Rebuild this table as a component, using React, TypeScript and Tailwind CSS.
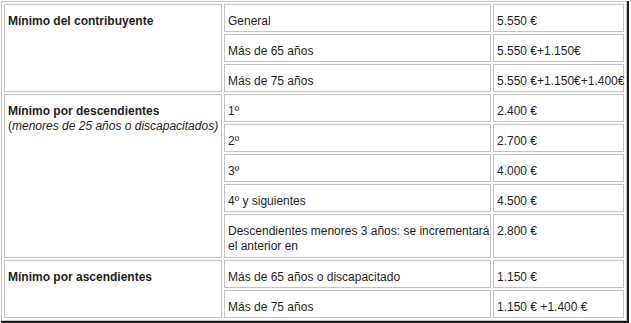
import React from 'react';

interface Row {
  label: string[];
  value: string;
  tall?: boolean;
}

interface Group {
  title: string;
  note?: string;
  rows: Row[];
}

const groups: Group[] = [
  {
    title: 'Mínimo del contribuyente',
    rows: [
      { label: ['General'], value: '5.550 €' },
      { label: ['Más de 65 años'], value: '5.550 €+1.150€' },
      { label: ['Más de 75 años'], value: '5.550 €+1.150€+1.400€' },
    ],
  },
  {
    title: 'Mínimo por descendientes',
    note: 'menores de 25 años o discapacitados',
    rows: [
      { label: ['1º'], value: '2.400 €' },
      { label: ['2º'], value: '2.700 €' },
      { label: ['3º'], value: '4.000 €' },
      { label: ['4º y siguientes'], value: '4.500 €' },
      {
        label: ['Descendientes menores 3 años: se incrementará', 'el anterior en'],
        value: '2.800 €',
        tall: true,
      },
    ],
  },
  {
    title: 'Mínimo por ascendientes',
    rows: [
      { label: ['Más de 65 años o discapacitado'], value: '1.150 €' },
      { label: ['Más de 75 años'], value: '1.150 € +1.400 €' },
    ],
  },
];

const cell = 'border border-[#c4c4c4] align-top pl-[3px] pr-0 pt-[9px] pb-0';

const App: React.FC = () => {
  return (
    <div className="w-[631px] h-[323px] bg-white overflow-hidden">
      <div
        className="ml-[1px] mt-[1px] w-[628px] border-r-2 border-b-2 border-[#1c1c1c] text-[12px] leading-[15px] text-[#1e1e1e]"
        style={{ fontFamily: '"Liberation Sans", Arial, sans-serif' }}
      >
        <table className="w-[626px] border border-[#c4c4c4] border-separate border-spacing-[2px] table-fixed">
          <colgroup>
            <col className="w-[218px]" />
            <col className="w-[267px]" />
            <col className="w-[131px]" />
          </colgroup>
          <tbody>
            {groups.map((g) =>
              g.rows.map((r, i) => (
                <tr key={g.title + r.label[0]} className={r.tall ? 'h-[44px]' : 'h-[28px]'}>
                  {i === 0 && (
                    <td rowSpan={g.rows.length} className={cell}>
                      <div className="font-bold">{g.title}</div>
                      {g.note && (
                        <div>
                          (<span className="italic">{g.note})</span>
                        </div>
                      )}
                    </td>
                  )}
                  <td className={cell + ' whitespace-nowrap'}>
                    {r.label.map((line) => (
                      <div key={line}>{line}</div>
                    ))}
                  </td>
                  <td className={cell + ' whitespace-nowrap'}>{r.value}</td>
                </tr>
              ))
            )}
          </tbody>
        </table>
      </div>
    </div>
  );
};

export default App;
